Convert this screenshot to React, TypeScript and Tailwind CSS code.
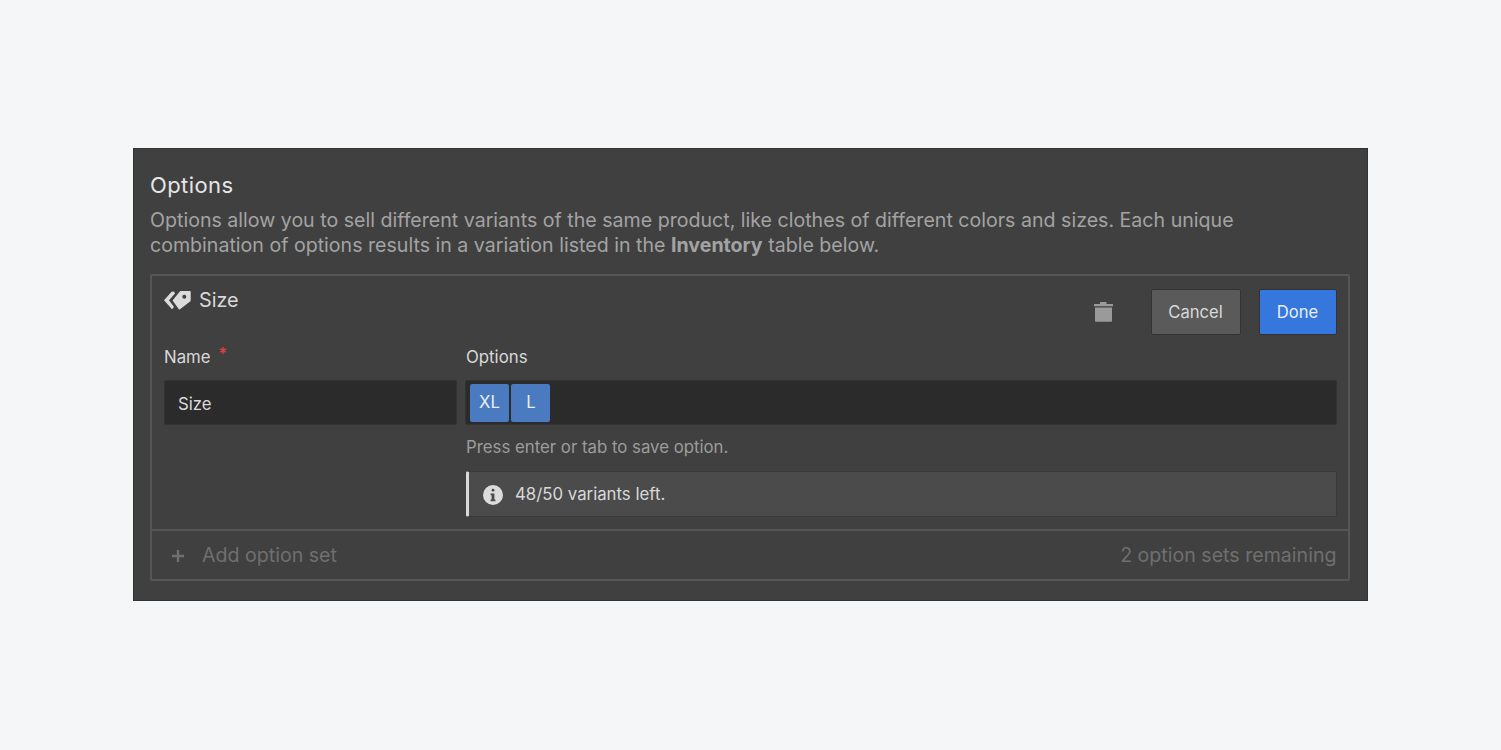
const font = { fontFamily: "Inter, sans-serif" };

function TagsIcon() {
  return (
    <svg width="27" height="19" viewBox="0 0 27 19" className="shrink-0">
      <path d="M7.6.7 0 9.3l8 9 2-2.4-5-6.6 6-6.7-1-2.2z" fill="#dcdcdc" />
      <path
        fillRule="evenodd"
        d="M16.7 0H26a.7.7 0 0 1 .7.7V9.600a.8.8 0 0 1-.3.6L16 18.300a.8.8 0 0 1-1.100-.1L8.900 9.900a.8.8 0 0 1 0-1L16 .3a.8.8 0 0 1 .7-.3zM20.300 3.700a2 2 0 1 0 0 4 2 2 0 0 0 0-4z"
        fill="#dcdcdc"
      />
    </svg>
  );
}

function TrashIcon() {
  return (
    <svg width="19" height="20" viewBox="0 0 19 20" className="shrink-0">
      <path d="M6 0h6.500v2H19v2.300H0V2h6z" fill="#9a9a9a" />
      <path d="M1 5.500h17V19a.8.8 0 0 1-.8.8H1.800A.8.8 0 0 1 1 19z" fill="#9a9a9a" />
    </svg>
  );
}

function InfoIcon() {
  return (
    <svg width="20" height="20" viewBox="0 0 20 20" className="shrink-0">
      <circle cx="10" cy="10" r="10" fill="#dcdcdc" />
      <rect x="8.600" y="3.800" width="2.800" height="2.800" rx="1.400" fill="#4a4a4a" />
      <path d="M7.600 8.400h3.800v6h1v1.800H7.600v-1.800h1v-4.200h-1z" fill="#4a4a4a" />
    </svg>
  );
}

function PlusIcon() {
  return (
    <svg width="12" height="12" viewBox="0 0 12 12" className="shrink-0">
      <path d="M4.800 0h2.400v4.800H12v2.400H7.200V12H4.800V7.200H0V4.800h4.800z" fill="#6f6f6f" />
    </svg>
  );
}

export default function App() {
  return (
    <div className="flex h-[750px] justify-center bg-[#f5f6f8] pt-[148px]" style={font}>
      <div className="h-[453px] w-[1235px] border border-[#333333] bg-[#404040] px-[16px] pt-[20px]">
        <div className="text-[22px] leading-[32px] tracking-[0.4px] text-[#e6e6e6]">Options</div>
        <p className="mt-[7px] text-[19.6px] leading-[25px] text-[#a3a3a3]">
          Options allow you to sell different variants of the same product, like clothes of different colors and sizes. Each unique
          <br />
          combination of options results in a variation listed in the <b className="font-bold">Inventory</b> table below.
        </p>

        <div className="mt-[16px] h-[307px] w-[1200px] rounded-[2px] border-2 border-[#565656]">
          <div className="flex h-[255px] flex-col border-b-2 border-[#565656] pl-[12px] pr-[11.5px]">
            <div className="flex h-[62px]">
              <div className="flex h-[48px] items-center gap-[8px]">
                <TagsIcon />
                <span className="pt-[2px] text-[19.8px] text-[#d9d9d9]">Size</span>
              </div>
              <div className="ml-auto mt-[13px] flex items-start">
                <div className="mr-[38px] mt-[13px]">
                  <TrashIcon />
                </div>
                <button className="flex h-[46px] w-[90px] items-center justify-center rounded-[2px] border border-[#333333] bg-[#5a5a5a] text-[16.6px] text-[#d9d9d9]">
                  Cancel
                </button>
                <button className="ml-[18px] flex h-[46px] w-[78px] items-center justify-center rounded-[2px] border border-[#333333] bg-[#3577dd] text-[16.6px] text-[#e8eefa]">
                  Done
                </button>
              </div>
            </div>

            <div className="flex gap-[8px]">
              <div className="w-[293px]">
                <div className="flex h-[42px] items-center gap-[8px] pb-[2px] text-[16.8px] text-[#d9d9d9]">
                  Name <span className="-mt-[6px] text-[#e0404a]">*</span>
                </div>
                <div className="flex h-[45px] items-center rounded-[2px] border border-[#333333] bg-[#2b2b2b] pl-[13px] pt-[4px] text-[16.8px] text-[#d9d9d9]">
                  Size
                </div>
              </div>
              <div className="flex-1">
                <div className="flex h-[42px] items-center pb-[2px] pl-[1px] text-[16.8px] text-[#d9d9d9]">Options</div>
                <div className="flex h-[45px] items-center gap-[2px] rounded-[2px] border border-[#333333] bg-[#2b2b2b] px-[4px]">
                  <span className="flex h-[38px] w-[39px] items-center justify-center rounded-[2px] bg-[#4a7abf] text-[16.8px] text-[#e8eefa]">XL</span>
                  <span className="flex h-[38px] w-[39px] items-center justify-center rounded-[2px] bg-[#4a7abf] pl-[1px] text-[16.8px] text-[#e8eefa]">L</span>
                </div>
                <div className="mt-[10px] pl-[1px] text-[16.8px] leading-[24px] text-[#9c9c9c]">Press enter or tab to save option.</div>
                <div className="ml-[1px] mt-[12px] flex h-[46px] items-center gap-[12px] rounded-[2px] border border-[#3a3a3a] border-l-[3px] border-l-[#d9d9d9] bg-[#4b4b4b] pl-[14px] pt-[1px] text-[16.8px] text-[#d9d9d9]">
                  <InfoIcon />
                  <span className="pt-[1px]">48/50 variants left.</span>
                </div>
              </div>
            </div>
          </div>

          <div className="flex h-[48px] items-center pl-[20px] pr-[11.5px] pt-[2px] text-[19.6px] text-[#6f6f6f]">
            <span className="mr-[18px]">
              <PlusIcon />
            </span>
            Add option set
            <span className="ml-auto">2 option sets remaining</span>
          </div>
        </div>
      </div>
    </div>
  );
}
